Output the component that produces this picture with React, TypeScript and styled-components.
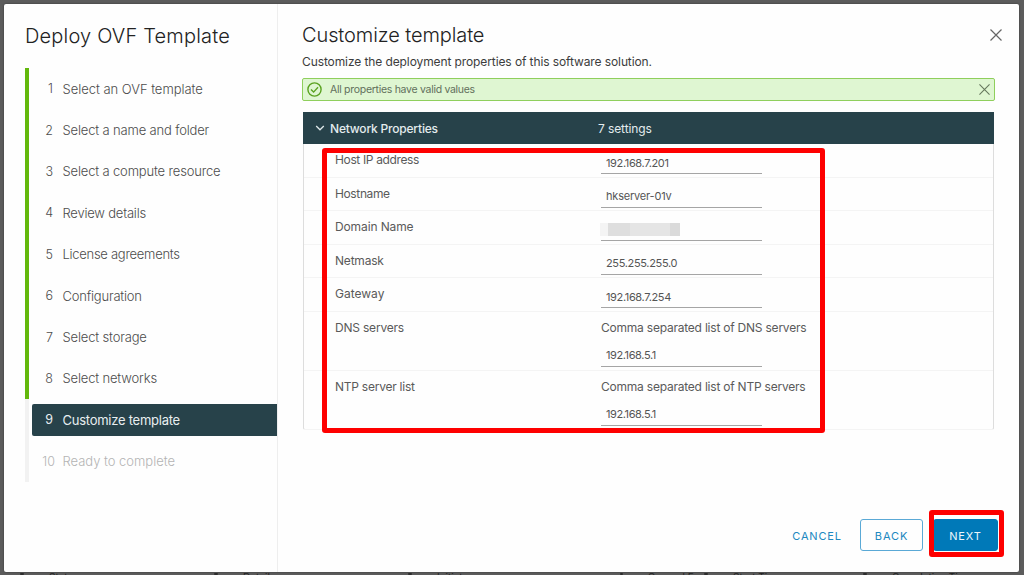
import React from "react";
import styled, { createGlobalStyle } from "styled-components";

const Global = createGlobalStyle`
  * { box-sizing: border-box; }
  html, body { margin: 0; padding: 0; }
  body { font-family: Inter, "Liberation Sans", sans-serif; color: #5a5a5a; overflow: hidden; }
  h1, h2, p { margin: 0; font-weight: 300; }
  button { font-family: inherit; cursor: pointer; }
`;

const Backdrop = styled.div`
  position: relative;
  width: 1024px;
  height: 575px;
  padding: 4px 5px 0 4px;
  background: #5c5c5c;
  overflow: hidden;
`;

const Dialog = styled.div`
  display: flex;
  height: 568px;
  background: #fefefe;
  border-radius: 2px;
  box-shadow: 0 0 2px #333;
`;

const Sidebar = styled.aside`
  width: 274px;
  flex: none;
  padding-left: 21px;
  border-right: 1px solid #eee;
`;

const SideTitle = styled.h1`
  height: 64px;
  padding-top: 18px;
  font-size: 20px;
  line-height: 28px;
  letter-spacing: 0.18px;
  color: #222;
  white-space: nowrap;
`;

const StepRow = styled.div<{ $state: "done" | "active" | "todo" }>`
  display: flex;
  align-items: center;
  height: 41.4px;
  padding-left: 3px;
  border-left: 4px solid ${(p) => (p.$state === "done" ? "#62b80c" : "#f2f2f2")};
`;

const StepBody = styled.div<{ $state: "done" | "active" | "todo" }>`
  display: flex;
  align-items: center;
  width: 100%;
  height: 32px;
  border-radius: 2px 0 0 2px;
  font-size: 13px;
  font-weight: ${(p) => (p.$state === "active" ? 400 : 300)};
  background: ${(p) => (p.$state === "active" ? "#27424a" : "transparent")};
  color: ${(p) => (p.$state === "active" ? "#e8eef0" : p.$state === "todo" ? "#b4b4b4" : "#4c4c4c")};
`;

const StepNumber = styled.span<{ $wide: boolean }>`
  width: ${(p) => (p.$wide ? 23 : 21)}px;
  margin-right: ${(p) => (p.$wide ? 7.5 : 9.5)}px;
  text-align: right;
  font-size: 12.5px;
`;

const Label = styled.span<{ $ls?: number }>`
  white-space: nowrap;
  letter-spacing: ${(p) => p.$ls ?? 0}px;
`;

const Main = styled.main`
  display: flex;
  flex-direction: column;
  flex: 1;
  min-width: 0;
  padding: 16px 24px 21px 24px;
`;

const Header = styled.header`
  display: flex;
  justify-content: space-between;
  align-items: center;
  height: 30px;
  margin-right: -7px;
`;

const Title = styled.h2`
  font-size: 20px;
  line-height: 28px;
  letter-spacing: -0.1px;
  color: #222;
`;

const IconButton = styled.button`
  display: flex;
  padding: 0;
  border: 0;
  background: none;
`;

const Intro = styled.p`
  height: 28px;
  padding-top: 4px;
  font-size: 12px;
  line-height: 16px;
  letter-spacing: -0.1px;
  font-weight: 400;
  color: #3c3c3c;
`;

const Alert = styled.div`
  display: flex;
  align-items: center;
  width: 693px;
  height: 23px;
  padding: 0 4px;
  border: 1px solid #8fcf5c;
  border-radius: 2px;
  background: #dff6d2;
  font-size: 10.5px;
`;

const AlertText = styled.span`
  flex: 1;
  margin-left: 8px;
  letter-spacing: -0.29px;
  color: #62705c;
`;

const Table = styled.section`
  position: relative;
  width: 691px;
  height: 318px;
  margin: 11px 0 0 1px;
  border: 1px solid #ddd;
  border-radius: 2px;
`;

const TableHead = styled.div`
  display: flex;
  align-items: center;
  height: 32px;
  margin: -1px -1px 0;
  padding-left: 12px;
  background: #27424a;
  color: #e4ecee;
  font-size: 12px;
  letter-spacing: -0.2px;
`;

const HeadName = styled.div`
  display: flex;
  align-items: center;
  gap: 5px;
  width: 283px;
  font-weight: 500;
`;

const PropertyRow = styled.div<{ $tall?: boolean }>`
  display: flex;
  height: ${(p) => (p.$tall ? 59 : 33.5)}px;
  padding: 8px 0 0 31px;
  border-bottom: 1px solid #f4f4f4;
  font-size: 12px;
  line-height: 16px;
  &:last-child { border-bottom: 0; }
`;

const PropertyName = styled.div`
  width: 266px;
  font-size: 12px;
`;

const PropertyValue = styled.div<{ $tall?: boolean }>`
  display: flex;
  flex-direction: column;
  justify-content: space-between;
  height: ${(p) => (p.$tall ? 47.4 : 22.5)}px;
`;

const Field = styled.div`
  display: flex;
  align-items: center;
  width: 161px;
  height: 22px;
  padding-left: 5px;
  border-bottom: 1px solid #a5a5a5;
  font-size: 11px;
  color: #555;
`;

const Mask = styled.div`
  display: flex;
  width: 80px;
  height: 13px;
  margin-left: -6px;
  span:nth-child(1) { width: 8px; background: #f4f4f4; }
  span:nth-child(2) { width: 22px; background: #dedede; }
  span:nth-child(3) { width: 40px; background: #e5e5e5; }
  span:nth-child(4) { width: 10px; background: #dadada; }
`;

const Highlight = styled.div`
  position: absolute;
  z-index: 2;
  border: 5px solid #fe0000;
  border-radius: 3px;
  pointer-events: none;
`;

const TableHighlight = styled(Highlight)`
  left: 18px;
  top: 35px;
  width: 503px;
  height: 285px;
`;

const ButtonHighlight = styled(Highlight)`
  left: -4px;
  top: -9px;
  width: 75px;
  height: 47px;
`;

const Footer = styled.footer`
  display: flex;
  justify-content: flex-end;
  margin-top: auto;
  margin-right: -3px;
`;

const NextSlot = styled.div`
  position: relative;
  margin-left: 10px;
`;

const Button = styled.button<{ $kind: "link" | "outline" | "solid" }>`
  width: ${(p) => (p.$kind === "link" ? 86 : p.$kind === "solid" ? 65 : 63)}px;
  height: 32px;
  padding: 1px 0 0;
  border: 1px solid ${(p) => (p.$kind === "link" ? "transparent" : p.$kind === "solid" ? "#0079b8" : "#5aa9d6")};
  border-radius: 3px;
  background: ${(p) => (p.$kind === "solid" ? "#0079b8" : "transparent")};
  color: ${(p) => (p.$kind === "solid" ? "#eef7fc" : "#2088c0")};
  font-size: 11px;
  letter-spacing: ${(p) => (p.$kind === "link" ? 0.8 : 0.9)}px;
`;

const TaskHeader = styled.div`
  display: grid;
  grid-template-columns: 194px 194px 212px 84px 159px 1fr;
  height: 3px;
  margin: 0 -5px 0 15px;
  overflow: hidden;
  font-size: 10px;
  line-height: 10px;
  color: #222;
`;

const TaskColumn = styled.span`
  display: flex;
  white-space: nowrap;
  &::before {
    content: "";
    width: 4px;
    height: 2px;
    margin: 1px 25px 0 1px;
    background: #2c2c2c;
    border-radius: 1px;
  }
`;

function Cross({ size, color }: { size: number; color: string }) {
  return (
    <svg width={size} height={size} viewBox="0 0 12 12" fill="none" stroke={color} strokeWidth="1.2">
      <path d="M.5 .5 11.5 11.5M11.5 .5 .5 11.5" />
    </svg>
  );
}

const steps: [string, number][] = [
  ["Select an OVF template", -0.03],
  ["Select a name and folder", -0.16],
  ["Select a compute resource", -0.16],
  ["Review details", -0.21],
  ["License agreements", -0.28],
  ["Configuration", -0.2],
  ["Select storage", -0.16],
  ["Select networks", -0.16],
  ["Customize template", -0.25],
  ["Ready to complete", -0.02],
];

interface Property {
  name: string;
  nameLs: number;
  value?: string;
  valueLs?: number;
  help?: string;
}

const properties: Property[] = [
  { name: "Host IP address", nameLs: -0.36, value: "192.168.7.201", valueLs: -0.36 },
  { name: "Hostname", nameLs: -0.37, value: "hkserver-01v", valueLs: -0.2 },
  { name: "Domain Name", nameLs: -0.12 },
  { name: "Netmask", nameLs: -0.2, value: "255.255.255.0", valueLs: -0.34 },
  { name: "Gateway", nameLs: 0, value: "192.168.7.254", valueLs: -0.36 },
  { name: "DNS servers", nameLs: -0.2, value: "192.168.5.1", valueLs: -0.4, help: "Comma separated list of DNS servers" },
  { name: "NTP server list", nameLs: -0.24, value: "192.168.5.1", valueLs: -0.4, help: "Comma separated list of NTP servers" },
];

const taskColumns = ["Status", "Details", "Initiator", "Queued For", "Start Time", "Completion Time"];

export default function App() {
  return (
    <Backdrop>
      <Global />
      <Dialog>
        <Sidebar>
          <SideTitle>Deploy OVF Template</SideTitle>
          {steps.map(([name, ls], i) => {
            const state = i < 8 ? "done" : i === 8 ? "active" : "todo";
            return (
              <StepRow key={name} $state={state}>
                <StepBody $state={state}>
                  <StepNumber $wide={i >= 9}>{i + 1}</StepNumber>
                  <Label $ls={ls}>{name}</Label>
                </StepBody>
              </StepRow>
            );
          })}
        </Sidebar>
        <Main>
          <Header>
            <Title>Customize template</Title>
            <IconButton aria-label="Close"><Cross size={12} color="#666" /></IconButton>
          </Header>
          <Intro>Customize the deployment properties of this software solution.</Intro>
          <Alert>
            <svg width="15" height="15" viewBox="0 0 15 15" fill="none" stroke="#5aa220" strokeWidth="1.4">
              <circle cx="7.5" cy="7.5" r="6.6" />
              <path d="M4 7.6 6.6 10.1 11 5.3" />
            </svg>
            <AlertText>All properties have valid values</AlertText>
            <IconButton aria-label="Dismiss"><Cross size={11} color="#66785e" /></IconButton>
          </Alert>
          <Table>
            <TableHead>
              <HeadName>
                <svg width="10" height="8" viewBox="0 0 10 8" fill="none" stroke="#dfe8ea" strokeWidth="1.3">
                  <path d="M1.2 2 5 5.8 8.8 2" />
                </svg>
                Network Properties
              </HeadName>
              <Label $ls={-0.1}>7 settings</Label>
            </TableHead>
            {properties.map((p) => (
              <PropertyRow key={p.name} $tall={!!p.help}>
                <PropertyName><Label $ls={p.nameLs}>{p.name}</Label></PropertyName>
                <PropertyValue $tall={!!p.help}>
                  {p.help && <Label $ls={-0.22}>{p.help}</Label>}
                  <Field>
                    {p.value ? (
                      <Label $ls={p.valueLs}>{p.value}</Label>
                    ) : (
                      <Mask><span /><span /><span /><span /></Mask>
                    )}
                  </Field>
                </PropertyValue>
              </PropertyRow>
            ))}
            <TableHighlight />
          </Table>
          <Footer>
            <Button $kind="link">CANCEL</Button>
            <Button $kind="outline">BACK</Button>
            <NextSlot>
              <Button $kind="solid">NEXT</Button>
              <ButtonHighlight />
            </NextSlot>
          </Footer>
        </Main>
      </Dialog>
      <TaskHeader>
        {taskColumns.map((name) => (
          <TaskColumn key={name}>{name}</TaskColumn>
        ))}
      </TaskHeader>
    </Backdrop>
  );
}
